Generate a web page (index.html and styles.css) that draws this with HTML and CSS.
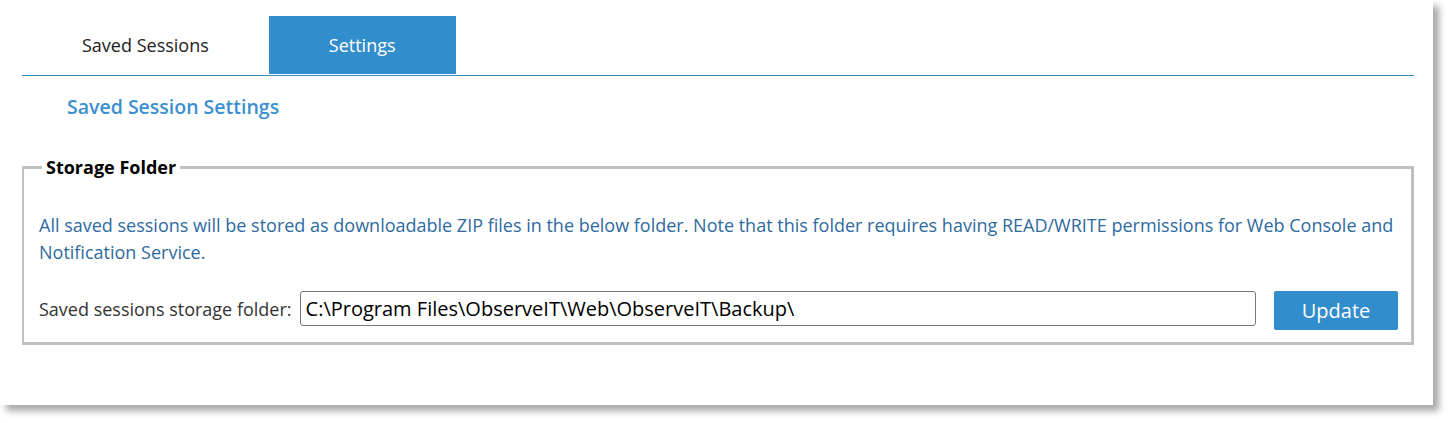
FILE: index.html
```html
<!DOCTYPE html>
<html lang="en">
<head>
    <meta charset="UTF-8">
    <title>Saved Session Settings</title>
    <link rel="stylesheet" href="styles.css">
</head>
<body>
    <div class="panel">
        <ul class="tabs">
            <li class="tab">Saved Sessions</li>
            <li class="tab active">Settings</li>
        </ul>

        <h2 class="title">Saved Session Settings</h2>

        <fieldset class="box">
            <legend>Storage Folder</legend>
            <p class="note">All saved sessions will be stored as downloadable ZIP files in the below folder. Note that this folder requires having READ/WRITE permissions for Web Console and Notification Service.</p>
            <div class="row">
                <label for="folder">Saved sessions storage folder:</label>
                <input type="text" id="folder" value="C:\Program Files\ObserveIT\Web\ObserveIT\Backup\">
                <button type="button">Update</button>
            </div>
        </fieldset>
    </div>
</body>
</html>
```

FILE: styles.css
```css
body {
    margin: 0;
    padding: 0 0 18px 0;
    background-color: #fff;
    font-family: "Open Sans", Arial, sans-serif;
}

.panel {
    width: 1433px;
    height: 405px;
    box-sizing: border-box;
    padding: 16px 19px 0 22px;
    background-color: #fff;
    box-shadow: 6px 6px 7px rgba(0, 0, 0, 0.35);
}

.tabs {
    list-style-type: none;
    margin: 0;
    padding: 0 0 1px 0;
    display: flex;
    border-bottom: 1px solid #3a87c0;
}

.tab {
    height: 58px;
    padding: 0 60px;
    display: flex;
    align-items: center;
    font-size: 18px;
    color: #222;
}

.tab.active {
    background-color: #318dcb;
    color: #fff;
}

.title {
    margin: 17px 0 0 45px;
    font-size: 19.5px;
    font-weight: 600;
    color: #3a8fcf;
}

.box {
    margin: 35px 0 0 0;
    padding: 33px 13px 12px 15px;
    border: 3px solid #c0c0c0;
    border-width: 3px 3px 3px 2px;
}

.box legend {
    margin-left: 3px;
    padding: 0 4px;
    font-size: 18px;
    font-weight: bold;
    color: #000;
}

.note {
    margin: 0;
    font-size: 18px;
    line-height: 27px;
    color: #2e6a9e;
}

.row {
    display: flex;
    align-items: center;
    margin-top: 21px;
}

.row label {
    font-size: 18px;
    color: #333;
    margin-right: 8px;
}

.row input {
    flex: 1;
    height: 35px;
    box-sizing: border-box;
    padding: 0 5px;
    border: 1px solid #777;
    border-radius: 3px;
    font-family: "Open Sans", Arial, sans-serif;
    font-size: 20px;
    color: #000;
}

.row button {
    margin-left: 18px;
    width: 124px;
    height: 39px;
    margin-top: 4px;
    background-color: #318dcb;
    color: #fff;
    border: none;
    border-radius: 2px;
    font-family: "Open Sans", Arial, sans-serif;
    font-size: 20px;
}
```
